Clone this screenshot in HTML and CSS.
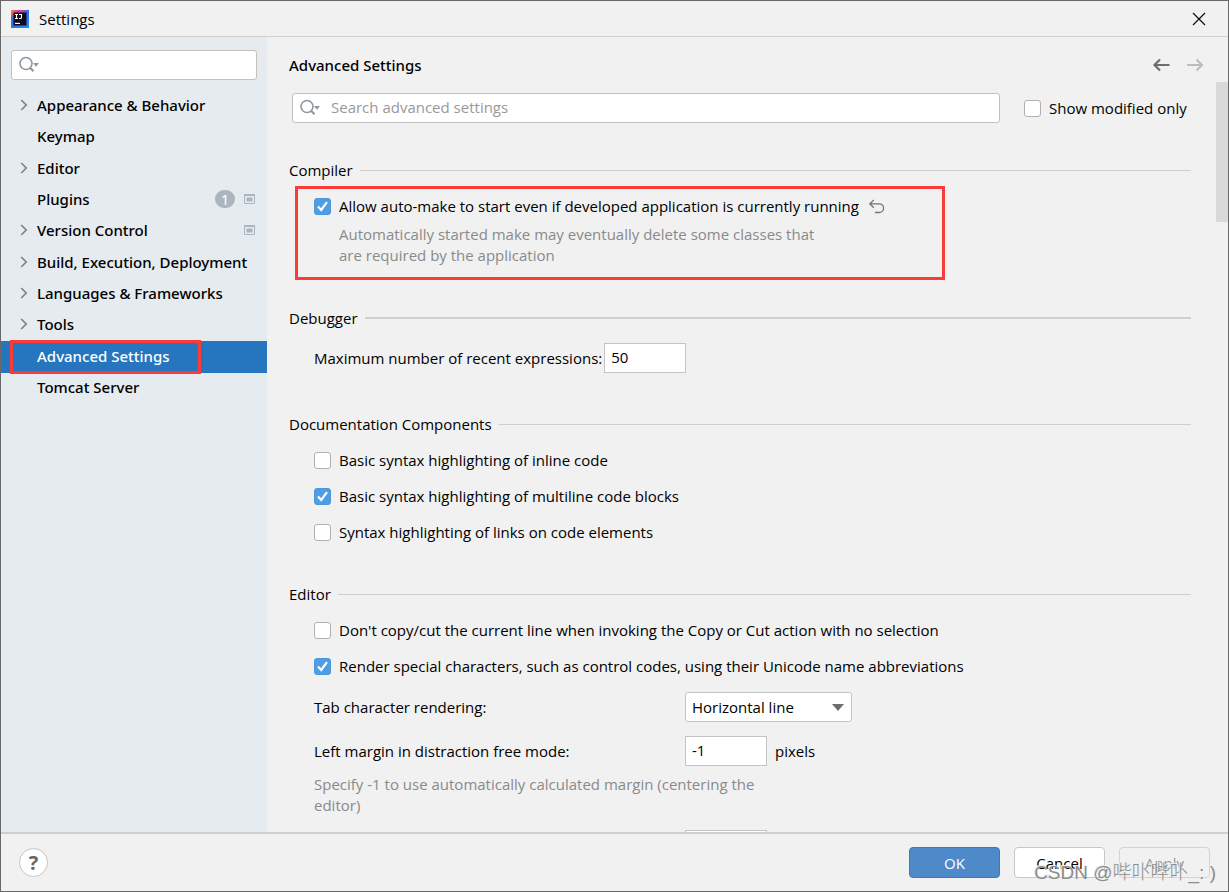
FILE: index.html
```html
<!DOCTYPE html>
<html lang="en">
<head>
<meta charset="utf-8">
<title>Settings</title>
<link rel="stylesheet" href="styles.css">
</head>
<body>
<svg class="defs" aria-hidden="true">
  <symbol id="search" viewBox="0 0 22 18"><circle cx="7" cy="7.500" r="6" fill="none" stroke="#8d979f" stroke-width="1.600"/><path d="M11 11.800 14.500 15.200" stroke="#8d979f" stroke-width="2.200"/><path d="M14 7h6l-3 3.800z" fill="#8d979f"/></symbol>
  <symbol id="chevron" viewBox="0 0 8 12"><path d="M1.200 1 6.200 6l-5 5" fill="none" stroke="#7f8386" stroke-width="1.700"/></symbol>
  <symbol id="project" viewBox="0 0 11 10"><path d="M.5.500h10v9H.5z" fill="none" stroke="#a9b6be"/><path d="M0 0h11v2H0z" fill="#a9b6be"/><path d="M2.500 3.500h6v4h-6z" fill="#a9b6be"/></symbol>
</svg>
<div class="window">
  <header class="titlebar">
    <svg class="logo" viewBox="0 0 18 18" aria-hidden="true">
      <defs>
        <linearGradient id="lg" x1="0" y1="0" x2="1" y2="1"><stop offset="0" stop-color="#fe8a3c"/><stop offset=".2" stop-color="#e8407f"/><stop offset=".38" stop-color="#8b4fc4"/><stop offset=".55" stop-color="#1d78f2"/><stop offset="1" stop-color="#2a8cff"/></linearGradient>
      </defs>
      <path d="M0 0h18v18H0z" fill="url(#lg)"/><path d="M0 8l3-3v13H0z" fill="#2478e8"/>
      <path d="M2.500 2.500h13v13h-13z" fill="#130a1e"/>
      <path d="M4 4.500h3M5.500 4.500v4M4 8.500h3M8 4.500h2.500v3q0 1-1 1H8" fill="none" stroke="#fff" stroke-width="1.100"/>
      <path d="M4 13.400h5" stroke="#fff" stroke-width="1.200"/>
    </svg>
    <span class="caption">Settings</span>
    <button class="icon-button" aria-label="Close"><svg width="14" height="14" viewBox="0 0 14 14"><path d="M1 1l12 12M13 1 1 13" stroke="#111" stroke-width="1.300"/></svg></button>
  </header>
  <div class="body">
    <nav class="sidebar">
      <label class="search"><svg class="glass"><use href="#search"/></svg><input type="text" aria-label="Search settings"></label>
      <ul class="tree">
        <li><svg class="chev"><use href="#chevron"/></svg><a href="#">Appearance &amp; Behavior</a></li>
        <li><a href="#">Keymap</a></li>
        <li><svg class="chev"><use href="#chevron"/></svg><a href="#">Editor</a></li>
        <li><a href="#">Plugins</a><span class="count">1</span><svg class="proj"><use href="#project"/></svg></li>
        <li><svg class="chev"><use href="#chevron"/></svg><a href="#">Version Control</a><svg class="proj"><use href="#project"/></svg></li>
        <li><svg class="chev"><use href="#chevron"/></svg><a href="#">Build, Execution, Deployment</a></li>
        <li><svg class="chev"><use href="#chevron"/></svg><a href="#">Languages &amp; Frameworks</a></li>
        <li><svg class="chev"><use href="#chevron"/></svg><a href="#">Tools</a></li>
        <li class="selected"><a href="#">Advanced Settings</a><span class="mark mark-nav"></span></li>
        <li><a href="#">Tomcat Server</a></li>
      </ul>
    </nav>
    <main class="main">
      <div class="head">
        <h1>Advanced Settings</h1>
        <button class="icon-button" aria-label="Back"><svg width="18" height="14" viewBox="0 0 18 14"><path d="M17.500 7H3M8 1.500 2.500 7 8 12.500" fill="none" stroke="#6e6e6e" stroke-width="2.200"/></svg></button>
        <button class="icon-button" aria-label="Forward" disabled><svg width="18" height="14" viewBox="0 0 18 14"><path d="M1 7h15M10.500 1.500 16 7l-5.500 5.500" fill="none" stroke="#bdbdbd" stroke-width="2.200"/></svg></button>
      </div>
      <div class="scroll">
        <div class="filter">
          <label class="search"><svg class="glass"><use href="#search"/></svg><input type="text" placeholder="Search advanced settings" aria-label="Search advanced settings"></label>
          <label class="check"><input type="checkbox">Show modified only</label>
        </div>
        <section>
          <h2>Compiler</h2>
          <div class="group">
            <div class="row"><label class="check"><input type="checkbox" checked>Allow auto-make to start even if developed application is currently running</label>
              <button class="icon-button" aria-label="Revert"><svg width="16" height="15" viewBox="0 0 16 15"><path d="M4.800 1 .8 4.800l4 3.900M1 4.800h9.200a4.300 4.300 0 0 1 0 8.700H6" fill="none" stroke="#757575" stroke-width="1.300"/></svg></button></div>
            <p class="hint indent">Automatically started make may eventually delete some classes that<br>are required by the application</p>
            <span class="mark mark-option"></span>
          </div>
        </section>
        <section>
          <h2 class="thick">Debugger</h2>
          <div class="field inline"><label for="recent">Maximum number of recent expressions:</label><input id="recent" class="text" type="text" value="50"></div>
        </section>
        <section>
          <h2>Documentation Components</h2>
          <div class="group">
            <div class="row"><label class="check"><input type="checkbox">Basic syntax highlighting of inline code</label></div>
            <div class="row"><label class="check"><input type="checkbox" checked>Basic syntax highlighting of multiline code blocks</label></div>
            <div class="row"><label class="check"><input type="checkbox">Syntax highlighting of links on code elements</label></div>
          </div>
        </section>
        <section class="near">
          <h2>Editor</h2>
          <div class="group">
            <div class="row"><label class="check"><input type="checkbox">Don't copy/cut the current line when invoking the Copy or Cut action with no selection</label></div>
            <div class="row"><label class="check"><input type="checkbox" checked>Render special characters, such as control codes, using their Unicode name abbreviations</label></div>
          </div>
          <div class="field first"><label for="tab">Tab character rendering:</label><span class="select"><select id="tab"><option>Horizontal line</option></select><svg width="12" height="7" viewBox="0 0 12 7"><path d="M0 0h12L6 7z" fill="#6e6e6e"/></svg></span></div>
          <div class="field"><label for="margin">Left margin in distraction free mode:</label><input id="margin" class="text" type="text" value="-1"><span>pixels</span></div>
          <p class="hint below">Specify -1 to use automatically calculated margin (centering the<br>editor)</p>
          <div class="field"><span></span><input class="text" type="text" aria-label="Next setting"></div>
        </section>
        <span class="thumb"></span>
      </div>
    </main>
  </div>
  <footer class="footer">
    <button class="help" aria-label="Help">?</button>
    <button class="btn primary">OK</button>
    <button class="btn">Cancel</button>
    <button class="btn" disabled>Apply</button>
    <span class="watermark">CSDN @哔卟哔卟_: )</span>
  </footer>
</div>
</body>
</html>
```
FILE: styles.css
```css
* { box-sizing: border-box; }
body { margin: 0; }
.defs { display: none; }
.window {
  display: flex; flex-direction: column; height: 100vh;
  border: 1px solid #69696a; background: #f1f1f1; color: #000;
  font: 15px/22px "Open Sans", "Noto Sans", sans-serif;
}
button, input, select { font: inherit; color: inherit; }
.icon-button { display: flex; padding: 0; border: 0; background: none; }

.titlebar { display: flex; align-items: center; height: 36px; padding: 0 22px 0 10px; border-bottom: 1px solid #cfcfcf; flex: none; }
.logo { width: 18px; height: 18px; margin-right: 10px; }
.caption { flex: 1; }

.body { display: flex; flex: 1; min-height: 0; }
.sidebar { width: 266px; flex: none; padding-top: 13px; background: #e6ebef; }
.search { display: flex; align-items: center; height: 30px; padding-left: 7px; border: 1px solid #c1c1c1; border-radius: 3px; background: #fff; }
.sidebar .search { margin: 0 10px; }
.glass { width: 22px; height: 18px; flex: none; }
.search input { flex: 1; min-width: 0; padding: 0 9px 2px; border: 0; outline: 0; background: none; }
.search input::placeholder { color: #999; opacity: 1; }
.tree { display: grid; grid-auto-rows: 1fr; height: 313px; margin: 11px 0 0; padding: 0; list-style: none; font-family: "Noto Sans", sans-serif; font-weight: 500; }
.tree li { position: relative; display: flex; align-items: center; padding: 0 12px 3px 36px; }
.tree a { flex: 1; color: inherit; text-decoration: none; white-space: nowrap; }
.chev { position: absolute; left: 19px; width: 8px; height: 12px; }
.proj { width: 11px; height: 10px; }
.count { width: 20px; height: 18px; margin-right: 9px; border-radius: 9px; background: #a9b6be; color: #fff; line-height: 18px; text-align: center; font-weight: 400; }
.selected { background: #2675bf; color: #fff; }

.mark { position: absolute; border: 3px solid #fb3a3a; pointer-events: none; }
.mark-nav { left: 9px; top: -1px; width: 191px; height: 34px; }
.mark-option { left: 6px; top: -2px; width: 650px; height: 94px; }

.main { display: flex; flex-direction: column; flex: 1; min-width: 0; }
.head { display: flex; align-items: center; gap: 16px; height: 45px; flex: none; padding: 11px 24px 0 22px; }
h1 { flex: 1; margin: 0; font-family: "Noto Sans", sans-serif; font-size: 15px; font-weight: 500; }
.scroll { position: relative; flex: 1; min-height: 0; overflow: hidden; padding: 11px 37px 0 22px; }
.thumb { position: absolute; top: 0; right: 0; width: 12px; height: 140px; background: #d9d9d9; }
.filter { display: flex; align-items: center; gap: 24px; margin-bottom: 36px; padding-left: 3px; }
.filter .search { flex: 1; }
.filter .check { width: 167px; }

section + section { margin-top: 40px; }
section.near { margin-top: 32px; }
h2 { display: flex; align-items: center; gap: 7px; margin: 0; font-size: 15px; font-weight: 400; }
h2::after { content: ""; flex: 1; height: 1px; background: #cfcfcf; }
h2.thick::after { height: 2px; }
.group { position: relative; margin-top: 7px; padding: 0 0 1px 25px; }
.row { display: flex; align-items: center; gap: 10px; height: 36px; }
.check { display: flex; align-items: center; gap: 8px; white-space: nowrap; }
.check input { appearance: none; width: 17px; height: 17px; margin: 0; border: 1px solid #b0b0b0; border-radius: 3px; background: #fff; }
.check input:checked {
  border-color: #4a97dc;
  background: #4f9ee3 url("data:image/svg+xml,%3Csvg xmlns='http://www.w3.org/2000/svg' viewBox='0 0 15 15'%3E%3Cpath d='M3 7.500 6.200 11 12 3.200' fill='none' stroke='white' stroke-width='2.200'/%3E%3C/svg%3E") center / 15px 15px no-repeat;
}
.hint { margin: 0; color: #8a8a8a; line-height: 21px; }
.indent { padding-left: 25px; }
.below { margin: 8px 0 0 25px; }

.field { display: grid; grid-template-columns: 371px auto auto; justify-content: start; align-items: center; height: 30px; margin-top: 14px; padding-left: 25px; }
.field.first { margin-top: 7px; }
.field.inline { display: flex; gap: 2px; }
.field .text { width: 82px; height: 30px; margin-right: 8px; padding: 0 6px 2px; border: 1px solid #c4c4c4; border-radius: 0; background: #fff; outline: 0; }
.select { position: relative; display: block; }
.select select { appearance: none; width: 167px; height: 30px; padding: 0 30px 0 6px; border: 1px solid #c4c4c4; border-radius: 3px; background: #fff; }
.select svg { position: absolute; right: 8px; top: 12px; pointer-events: none; }

.footer { position: relative; display: flex; align-items: center; gap: 14px; flex: none; height: 59px; padding: 1px 18px; border-top: 2px solid #cfcfcf; }
.help { width: 29px; height: 29px; margin-right: auto; padding: 0; border: 1px solid #c4c4c4; border-radius: 50%; background: #fff; color: #666; font-size: 20px; font-weight: 700; line-height: 26px; }
.btn { width: 91px; height: 31px; padding: 0; border: 1px solid #c7c7c7; border-radius: 4px; background: #fff; }
.btn.primary { border-color: #3f78b8; background: #4e8aca; color: #fff; }
.btn:disabled { border-color: #d3d3d3; background: transparent; color: #9a9a9a; }
.watermark { position: absolute; right: 12px; bottom: 4px; color: #8c8c8c; font: 300 19px/28px "Liberation Sans", "Noto Sans CJK SC", sans-serif; text-shadow: -1px -1px 0 #eee; white-space: nowrap; pointer-events: none; }
```
